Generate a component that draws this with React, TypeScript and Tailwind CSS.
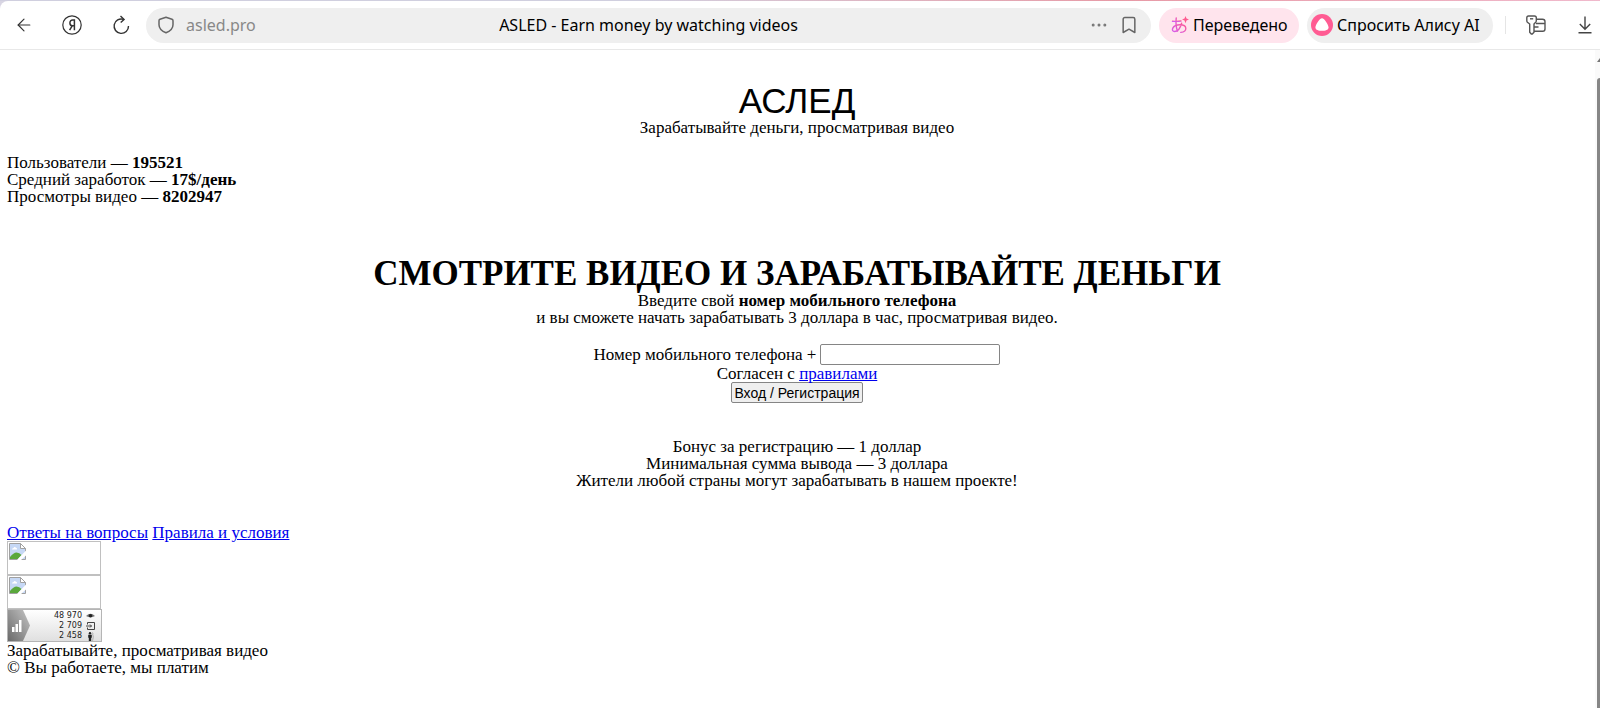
import { ArrowLeft, Bookmark, Ellipsis } from "lucide-react";

const STATS = [
  { label: "Пользователи", value: "195521" },
  { label: "Средний заработок", value: "17$/день" },
  { label: "Просмотры видео", value: "8202947" },
];

function YandexIcon() {
  return (
    <svg width="20" height="20" viewBox="0 0 20 20" fill="none" stroke="#333" strokeWidth="1.2">
      <circle cx="10" cy="10" r="9.2" />
      <path d="M12.4 15.2V5h-1.800a2.700 2.900 0 0 0 0 5.800h1.800M10.200 10.800l-2.600 4.400" strokeWidth="1.5" />
    </svg>
  );
}

function ReloadIcon() {
  return (
    <svg width="18" height="20" viewBox="0 0 18 20" fill="none" stroke="#333" strokeWidth="1.4">
      <path d="M11.500 4.300A7.200 7.200 0 1 0 16.500 11" />
      <path d="M8.500 1l3.600 3.400-3.400 3.200" />
    </svg>
  );
}

function ShieldIcon() {
  return (
    <svg width="16" height="18" viewBox="0 0 16 18" fill="none" stroke="#666" strokeWidth="1.5" strokeLinejoin="round">
      <path d="M8 1.2 14 3.3q1 .4 1 1.4v4c0 3.900-3.200 6.500-7 8.100-3.800-1.600-7-4.200-7-8.100v-4q0-1 1-1.400z" />
    </svg>
  );
}

function TranslateIcon() {
  return (
    <svg width="18" height="18" viewBox="0 0 18 18" fill="none" strokeWidth="1.4" strokeLinecap="round">
      <defs>
        <linearGradient id="tr" x1="0" y1="1" x2="1" y2="0">
          <stop offset="0" stopColor="#d35cf0" />
          <stop offset="1" stopColor="#ff5a90" />
        </linearGradient>
      </defs>
      <g stroke="url(#tr)">
        <path d="M1.500 5.200c3 .3 6 .2 8.500-.2" />
        <path d="M5.200 2c-.5 5-.4 9 1.300 13" />
        <path d="M10.600 7.200c-1.200 4.500-4 8.300-7 8.300-4 0-2.600-6.700 5.400-6.700 7.600 0 7.600 6.900.8 7.600" />
      </g>
      <path d="M14.500 0l1 2.600 2.500 1-2.500 1-1 2.600-1-2.600-2.500-1 2.500-1z" fill="#ff5a90" />
    </svg>
  );
}

function AliceIcon() {
  return (
    <svg width="22" height="22" viewBox="0 0 22 22">
      <circle cx="11" cy="11" r="11" fill="#ff5c93" />
      <path d="M11 4.200c2.400 0 6.600 6.600 6.600 9.300 0 2.500-3.400 3.300-6.600 3.300s-6.600-.8-6.600-3.300c0-2.700 4.200-9.300 6.600-9.300z" fill="#fff" />
    </svg>
  );
}

function KeysIcon() {
  return (
    <svg width="20" height="20" viewBox="0 0 20 20" fill="none" stroke="#555" strokeWidth="1.4" strokeLinejoin="round">
      <path d="M2.500 1h6q1.800 0 1.800 1.800v2.700q0 1-.6 1.700L8 9v8.200L6.300 19h-1L3.700 17.200V9L1.400 7.200Q.8 6.500.8 5.500V2.800Q.8 1 2.500 1z" />
      <path d="M4 3.800h3.200" />
      <path d="M10.500 4.300h6q2.500 0 2.500 2.500v7.200q0 2.300-2.300 2.300H8M10 8.500h9M8 12h4.500" />
    </svg>
  );
}

function DownloadIcon() {
  return (
    <svg width="14" height="18" viewBox="0 0 14 18" fill="none" stroke="#444" strokeWidth="1.4">
      <path d="M7 .5v12.500M1.800 8 7 13.200 12.200 8M.5 16.800h13" />
    </svg>
  );
}

function Toolbar() {
  return (
    <div className="bg-[#d8d5e3]">
      <div className="h-px bg-linear-to-r from-[#d0cfdf] from-40% via-[#e79aa6] via-70% to-[#f0b9cc]" />
      <header className="flex h-12 items-center rounded-tl-lg bg-white pr-2 pl-3.5 font-['Noto_Sans',sans-serif] text-base text-black">
        <nav className="flex items-center">
          <button aria-label="Назад" className="flex w-8">
            <ArrowLeft size={20} strokeWidth={1.4} className="text-[#333]" />
          </button>
          <button aria-label="Яндекс" className="ml-4 flex w-8">
            <YandexIcon />
          </button>
          <button aria-label="Обновить" className="ml-[18px] flex w-8">
            <ReloadIcon />
          </button>
        </nav>
        <div className="ml-0.5 flex h-[35px] min-w-0 flex-1 items-center rounded-full bg-[#efefef] px-3">
          <div className="flex flex-1 items-center gap-3">
            <ShieldIcon />
            <span className="text-[#888]">asled.pro</span>
          </div>
          <span>ASLED - Earn money by watching videos</span>
          <div className="flex flex-1 items-center justify-end gap-2.5">
            <button aria-label="Ещё">
              <Ellipsis size={20} strokeWidth={1.6} className="text-[#777]" />
            </button>
            <button aria-label="В закладки">
              <Bookmark size={20} strokeWidth={1.8} className="text-[#666]" />
            </button>
          </div>
        </div>
        <button className="ml-2 flex h-[35px] w-[140px] items-center gap-1 rounded-full bg-[#ffe4ed] pl-3">
          <TranslateIcon />
          Переведено
        </button>
        <button className="ml-2 flex h-[35px] w-[186px] items-center gap-1 rounded-full bg-[#efefef] pl-1">
          <AliceIcon />
          Спросить Алису AI
        </button>
        <span className="ml-3 h-[18px] w-px bg-[#e5e5e5]" />
        <button aria-label="Пароли" className="ml-5">
          <KeysIcon />
        </button>
        <button aria-label="Загрузки" className="ml-8">
          <DownloadIcon />
        </button>
      </header>
      <div className="h-px bg-[#e8e8e8]" />
    </div>
  );
}

function BrokenImage() {
  return (
    <div role="img" className="h-[34px] w-[94px] border border-[#c0c0c0]">
      <svg width="19" height="19" viewBox="0 0 19 19">
        <path d="M1.500 1.500h11l5 5v11h-16z" fill="#c6d8f5" stroke="#a0a0a0" />
        <path d="M4 7.500q0-1.500 1.500-1.500 .8-1.700 2.200-.6Q9.500 6 9 7.500z" fill="#fff" />
        <path d="M2 17v-2q3.500-4.500 6.500-4.500 3 0 5 2.500L10 17z" fill="#5aa83c" />
        <path d="M12.500 1.500v5h5z" fill="#fff" stroke="#a0a0a0" />
        <path d="M18.500 8 8.500 18.500h4L18.500 13z" fill="#fff" />
      </svg>
    </div>
  );
}

function Counter() {
  return (
    <div className="flex h-[33px] w-[95px] justify-between border border-[#b5b5b5] bg-linear-to-b from-white to-[#e0e0e0] pr-1.5 font-['DejaVu_Sans',sans-serif] text-[8px] leading-[10px] text-[#222]">
      <svg width="23" height="31" viewBox="0 0 23 31">
        <defs>
          <linearGradient id="ct" x1="1" y1="0" x2="0" y2="1">
            <stop offset="0" stopColor="#c4c4c4" />
            <stop offset="1" stopColor="#6a6a6a" />
          </linearGradient>
        </defs>
        <path d="M0 0h15l7 15.500L15 31H0z" fill="url(#ct)" />
        <path d="M4 17h2.500v5H4zM7.500 14H10v8H7.500zM11 10h2.500v12H11z" fill="#fff" />
      </svg>
      <ul className="pt-px text-right">
        <li className="flex items-center justify-end gap-1">
          48 970
          <svg width="9" height="8" viewBox="0 0 9 8">
            <path d="M0 4Q4.500-.5 9 4 4.500 6.500 0 4z" fill="#777" />
            <circle cx="4.500" cy="3.800" r="1.800" fill="#222" />
          </svg>
        </li>
        <li className="flex items-center justify-end gap-1">
          2 709
          <svg width="9" height="8" viewBox="0 0 9 8" fill="none" stroke="#444">
            <path d="M1.500 2.500v-2h7v7h-7v-2M0 4h5.500M4 2.500 5.500 4 4 5.500" />
          </svg>
        </li>
        <li className="flex items-center justify-end gap-1">
          2 458
          <svg width="9" height="9" viewBox="0 0 9 9">
            <circle cx="4" cy="1.200" r="1.200" fill="#222" />
            <path d="M2.200 2.800h3.600v3h-.6V9H2.800V5.800h-.6z" fill="#222" />
            <path d="M6 .5q2 1 .6 2.300.8.500.6 3-.5 1.500-.6 3" fill="none" stroke="#aaa" />
          </svg>
        </li>
      </ul>
    </div>
  );
}

function Link({ children }: { children: string }) {
  return (
    <a href="#" className="text-[#0000ee] underline">
      {children}
    </a>
  );
}

function Page() {
  return (
    <main className="flex-1 pt-8 pr-2 pl-[7px] font-['Liberation_Serif',serif] text-[17px] leading-[17px] text-black">
      <section className="text-center">
        <div className="font-['Liberation_Sans',sans-serif] text-[35px] leading-[37px]">АСЛЕД</div>
        <p>Зарабатывайте деньги, просматривая видео</p>
      </section>

      <section className="mt-[18px]">
        {STATS.map((s) => (
          <p key={s.label}>
            {s.label} — <b>{s.value}</b>
          </p>
        ))}
      </section>

      <section className="mt-[50px] text-center">
        <h1 className="text-[35px] leading-[37px] font-bold">СМОТРИТЕ ВИДЕО И ЗАРАБАТЫВАЙТЕ ДЕНЬГИ</h1>
        <p>
          Введите свой <b>номер мобильного телефона</b>
        </p>
        <p>и вы сможете начать зарабатывать 3 доллара в час, просматривая видео.</p>
      </section>

      <form className="mt-[17px] text-center" onSubmit={(e) => e.preventDefault()}>
        <div className="flex h-[22px] items-center justify-center gap-1">
          <label htmlFor="phone">Номер мобильного телефона +</label>
          <input
            id="phone"
            type="text"
            className="h-[21px] w-[180px] rounded-xs border border-[#858585] bg-white px-0.5 text-sm"
          />
        </div>
        <p>
          Согласен с <Link>правилами</Link>
        </p>
        <button
          type="submit"
          className="mx-auto block h-[21px] rounded-xs border border-[#858585] bg-[#efefef] px-0.5 font-['Liberation_Sans',sans-serif] text-sm leading-[18px]"
        >
          Вход / Регистрация
        </button>
      </form>

      <section className="mt-[35px] text-center">
        <p>Бонус за регистрацию — 1 доллар</p>
        <p>Минимальная сумма вывода — 3 доллара</p>
        <p>Жители любой страны могут зарабатывать в нашем проекте!</p>
      </section>

      <footer className="mt-[35px]">
        <p>
          <Link>Ответы на вопросы</Link> <Link>Правила и условия</Link>
        </p>
        <BrokenImage />
        <BrokenImage />
        <Counter />
        <p>Зарабатывайте, просматривая видео</p>
        <p>© Вы работаете, мы платим</p>
      </footer>
    </main>
  );
}

function Scrollbar() {
  return (
    <div className="flex w-[5px] flex-col items-end bg-[#fafafa] pt-2">
      <svg width="3" height="4" viewBox="0 0 3 4">
        <path d="M0 4 3 0v4z" fill="#777" />
      </svg>
      <div className="mt-4 w-[3px] flex-1 rounded-tl-sm bg-[#868686]" />
    </div>
  );
}

export default function App() {
  return (
    <div className="flex min-h-screen flex-col bg-white">
      <Toolbar />
      <div className="flex flex-1">
        <Page />
        <Scrollbar />
      </div>
    </div>
  );
}
